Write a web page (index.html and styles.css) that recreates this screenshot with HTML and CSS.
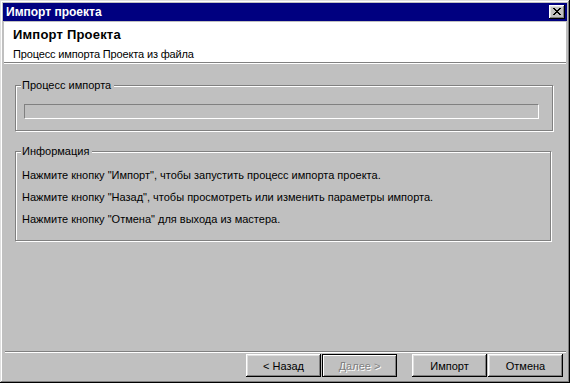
FILE: index.html
```html
<!DOCTYPE html>
<html lang="ru">
<head>
<meta charset="utf-8">
<title>Импорт проекта</title>
<link rel="stylesheet" href="styles.css">
</head>
<body>
<div class="window">
  <div class="titlebar">
    <span class="title">Импорт проекта</span>
    <button class="close" type="button" aria-label="Закрыть">
      <svg width="8" height="7" viewBox="0 0 8 7" shape-rendering="crispEdges"><path fill="#000" d="M0 0h2v1H0zM6 0h2v1H6zM1 1h2v1H1zM5 1h2v1H5zM2 2h4v1H2zM3 3h2v1H3zM2 4h4v1H2zM1 5h2v1H1zM5 5h2v1H5zM0 6h2v1H0zM6 6h2v1H6z"/></svg>
    </button>
  </div>
  <div class="header">
    <div class="h-title">Импорт Проекта</div>
    <div class="h-sub">Процесс импорта Проекта из файла</div>
  </div>
  <div class="sep"></div>
  <div class="body">
    <fieldset class="group g1">
      <legend>Процесс импорта</legend>
      <div class="progress"></div>
    </fieldset>
    <fieldset class="group g2">
      <legend>Информация</legend>
      <p>Нажмите кнопку "Импорт", чтобы запустить процесс импорта проекта.</p>
      <p>Нажмите кнопку "Назад", чтобы просмотреть или изменить параметры импорта.</p>
      <p>Нажмите кнопку "Отмена" для выхода из мастера.</p>
    </fieldset>
  </div>
  <div class="footer">
    <div class="sep2"></div>
    <div class="buttons">
      <button class="btn" type="button">&lt; Назад</button>
      <button class="btn default" type="button" disabled>Далее &gt;</button>
      <button class="btn spaced" type="button">Импорт</button>
      <button class="btn" type="button">Отмена</button>
    </div>
  </div>
</div>
</body>
</html>
```
FILE: styles.css
```css
html, body {
  margin: 0;
  padding: 0;
  background: #c0c0c0;
}
body {
  font-family: "Liberation Sans", Arial, sans-serif;
  font-size: 11px;
  color: #000;
}
.window {
  width: 570px;
  height: 383px;
  box-sizing: border-box;
  padding: 3px;
  background: #c0c0c0;
  box-shadow: inset -1px -1px #000, inset 1px 1px #dfdfdf, inset -2px -2px #808080, inset 2px 2px #fff;
  display: flex;
  flex-direction: column;
}
.titlebar {
  height: 18px;
  flex: none;
  background: #000080;
  color: #fff;
  font-weight: bold;
  font-size: 12px;
  display: flex;
  align-items: center;
  justify-content: space-between;
  padding: 0 2px 0 3px;
}
.title {
  line-height: 14px;
}
.close {
  width: 16px;
  height: 14px;
  padding: 0 0 1px 0;
  border: 0;
  background: #c0c0c0;
  box-shadow: inset -1px -1px #000, inset 1px 1px #fff, inset -2px -2px #808080, inset 2px 2px #dfdfdf;
  display: flex;
  align-items: center;
  justify-content: center;
  box-sizing: border-box;
}
.close svg {
  display: block;
}
.header {
  flex: none;
  background: #fff;
  margin: 1px 1px 0 1px;
  height: 40px;
  box-sizing: border-box;
  padding: 5px 9px 0;
}
.h-title {
  font-size: 13px;
  font-weight: bold;
  line-height: 16px;
  letter-spacing: 0.2px;
}
.h-sub {
  line-height: 13px;
  margin-top: 5px;
  letter-spacing: -0.15px;
}
.sep {
  flex: none;
  border-top: 1px solid #808080;
  border-bottom: 1px solid #fff;
  margin: 0 1px;
}
.body {
  flex: 1;
  padding: 15px 0 0 12px;
}
.group {
  margin: 0;
  min-width: 0;
  box-sizing: border-box;
  border: 1px solid #808080;
  box-shadow: inset 1px 1px #fff, 1px 1px #fff;
  padding-left: 5px;
  padding-right: 0;
}
.group legend {
  padding: 0 3px 0 1px;
  line-height: 13px;
  background: #c0c0c0;
}
.g1 {
  width: 538px;
  padding-top: 12px;
  padding-bottom: 11px;
}
.progress {
  width: 515px;
  height: 15px;
  margin-left: 3px;
  box-sizing: border-box;
  border: 1px solid;
  border-color: #808080 #fff #fff #808080;
}
.g2 {
  width: 536px;
  margin-top: 14px;
  padding-top: 11px;
  padding-bottom: 14px;
}
.g2 p {
  margin: 0 0 9px 1px;
  line-height: 13px;
}
.g2 p:last-child {
  margin-bottom: 0;
}
.footer {
  flex: none;
}
.sep2 {
  border-top: 1px solid #808080;
  border-bottom: 1px solid #fff;
  margin: 0 1px 0 2px;
}
.buttons {
  display: flex;
  justify-content: flex-end;
  gap: 1px;
  padding: 1px 4px 3px 0;
}
.btn {
  width: 75px;
  height: 23px;
  padding: 0;
  border: 0;
  font-family: "Liberation Sans", Arial, sans-serif;
  font-size: 11px;
  color: #000;
  background: #c0c0c0;
  box-shadow: inset -1px -1px #000, inset 1px 1px #fff, inset -2px -2px #808080, inset 2px 2px #dfdfdf;
}
.btn.default {
  box-shadow: inset 0 0 0 1px #000, inset 2px 2px #fff, inset -2px -2px #808080;
}
.btn:disabled {
  color: #808080;
  text-shadow: 1px 1px #fff;
}
.btn.spaced {
  margin-left: 14px;
}
```
